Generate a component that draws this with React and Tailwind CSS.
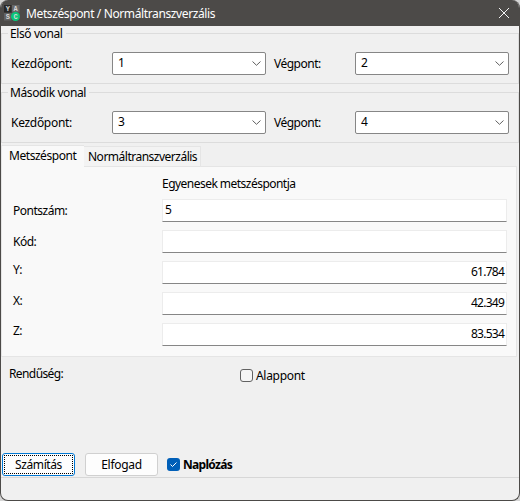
import clsx from "clsx";

const results = [
  { label: "Pontszám:", value: "5", shift: "pt-[4px]" },
  { label: "Kód:", value: "", shift: "pt-[4px]" },
  { label: "Y:", value: "61.784", shift: "pt-px", numeric: true },
  { label: "X:", value: "42.349", shift: "pt-px", numeric: true },
  { label: "Z:", value: "83.534", numeric: true },
];

function AppIcon() {
  return (
    <svg width="16" height="16" viewBox="0 0 16 16" className="ml-[3px] shrink-0">
      <rect width="7.5" height="7.5" fill="#292929" />
      <rect x="8" width="7.5" height="7.5" fill="#686868" />
      <rect y="8" width="7.5" height="7.5" fill="#626262" />
      <circle cx="11.5" cy="11.5" r="4.5" fill="#0ac779" />
      <g fill="#d8d8d8" fontFamily="Liberation Mono, monospace" fontSize="7" fontWeight="700" textAnchor="middle">
        <text x="3.8" y="6">Y</text>
        <text x="11.6" y="6">A</text>
        <text x="3.8" y="14">S</text>
        <text x="11.5" y="14">C</text>
      </g>
    </svg>
  );
}

function TitleBar() {
  return (
    <header className="flex h-[26px] shrink-0 items-center bg-[#4c4a48] text-white">
      <AppIcon />
      <h1 className="ml-[6px] grow pt-px text-[12px] leading-[16px] tracking-[-0.38px]">Metszéspont / Normáltranszverzális</h1>
      <svg width="12" height="12" viewBox="0 0 12 12" className="mr-[9px]" stroke="#f4f4f4" strokeWidth="1">
        <path d="M1 1 11 11M11 1 1 11" />
      </svg>
    </header>
  );
}

function Combo({ value }) {
  return (
    <div className="flex h-[23px] w-[154px] shrink-0 items-center justify-between rounded-[2px] border border-[#868686] bg-white pl-[5px] pr-[4px]">
      <span className="-mt-[2px] leading-[16px]">{value}</span>
      <svg width="9" height="5" viewBox="0 0 9 5" fill="none" stroke="#606060" strokeWidth="1">
        <path d="M.5 .5 4.5 4.3 8.5 .5" />
      </svg>
    </div>
  );
}

function LineGroup({ title, start, end }) {
  return (
    <section className="h-[59px]">
      <div className="flex h-[15px] items-center">
        <span className="h-px w-[7px] bg-[#dcdcdc]" />
        <h2 className="pl-[2px] pr-[3px] pt-px leading-[16px] tracking-[-0.4px]">{title}</h2>
        <span className="h-px grow bg-[#dcdcdc]" />
      </div>
      <div className="-mt-[8px] h-[51px] border-x border-b border-[#dcdcdc] pt-[19px]">
        <div className="flex items-center pl-[9px]">
          <span className="w-[101px] leading-[16px] tracking-[-0.3px]">Kezdőpont:</span>
          <Combo value={start} />
          <span className="ml-[8px] w-[81px] leading-[16px] tracking-[-0.5px]">Végpont:</span>
          <Combo value={end} />
        </div>
      </div>
    </section>
  );
}

function ResultTabs() {
  return (
    <section className="mt-[1px]">
      <div className="flex h-[21px] items-end">
        <div className="relative z-10 -mb-px h-[22px] w-[83px] border-l border-t border-[#e5e5e5] bg-[#f9f9f9] pl-[7px] pt-[2px] leading-[16px] tracking-[-0.45px]">
          Metszéspont
        </div>
        <div className="h-[20px] w-[117px] border-r border-t border-[#e5e5e5] bg-[#f3f3f3] pl-[4px] pt-[2px] leading-[16px] tracking-[-0.5px]">
          Normáltranszverzális
        </div>
      </div>
      <div className="mr-[2px] h-[191px] border border-[#e5e5e5] bg-[#f9f9f9] pl-[11px] pt-[9px]">
        <h3 className="pl-[149px] leading-[16px] tracking-[-0.53px]">Egyenesek metszéspontja</h3>
        <div className="mt-[7px] flex flex-col gap-[8px]">
          {results.map(({ label, value, shift, numeric }) => (
            <div key={label} className="flex h-[23px]">
              <span className={clsx("w-[149px] leading-[16px] tracking-[-0.5px]", shift)}>{label}</span>
              <div
                className={clsx(
                  "w-[345px] border border-[#ececec] border-b-[#868686] bg-white px-[2px] pt-[2px] leading-[16px]",
                  numeric && "text-right tracking-[-0.75px]",
                )}
              >
                {value}
              </div>
            </div>
          ))}
        </div>
      </div>
    </section>
  );
}

export default function App() {
  return (
    <div className="h-[501px] w-[520px] bg-[#d5d5d5]">
      <main className="flex h-full flex-col overflow-hidden rounded-[8px] border border-[#4c4a48] border-t-0 bg-[#f0f0f0] font-['Noto_Sans','Open_Sans',sans-serif] text-[12px] text-black">
        <TitleBar />
        <div className="h-[427px] shrink-0">
          <LineGroup title="Első vonal" start="1" end="2" />
          <LineGroup title="Második vonal" start="3" end="4" />
          <ResultTabs />
          <div className="flex pl-[8px] pt-[9px] leading-[16px]">
            <span className="w-[231px] tracking-[-0.6px]">Rendűség:</span>
            <span className="mt-[3px] size-[13px] rounded-[3px] border border-[#626262] bg-[#f5f5f5]" />
            <span className="ml-[3px] mt-[2px] tracking-[-0.3px]">Alappont</span>
          </div>
        </div>
        <footer className="h-[47px] shrink-0">
          <div className="flex h-[24px] items-start pl-[1px]">
            <button className="h-[23px] w-[73px] rounded-[3px] border border-[#0078d4] bg-[#fdfdfd] p-px">
              <span className="flex h-full items-center justify-center border border-dotted border-black leading-[16px] tracking-[-0.4px]">Számítás</span>
            </button>
            <button className="ml-[10px] h-[23px] w-[73px] rounded-[3px] border border-[#d0d0d0] bg-[#fdfdfd] leading-[16px] tracking-[-0.3px]">Elfogad</button>
            <svg width="13" height="13" viewBox="0 0 13 13" className="ml-[9px] mt-[5px]">
              <rect width="13" height="13" rx="3" fill="#005fb8" />
              <path d="M3.5 6.5 5.5 8.5 9.5 4.5" fill="none" stroke="white" />
            </svg>
            <span className="ml-[3px] mt-[4px] font-bold leading-[16px] tracking-[-0.7px]">Naplózás</span>
          </div>
          <div className="border-t border-[#d7d7d7]" />
        </footer>
      </main>
    </div>
  );
}
